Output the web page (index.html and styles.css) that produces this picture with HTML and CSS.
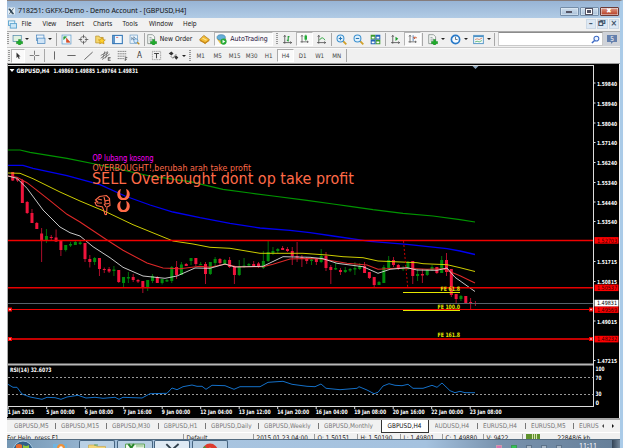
FILE: index.html
```html
<!DOCTYPE html>
<html lang="id">
<head>
<meta charset="utf-8">
<title>GKFX-Demo - GBPUSD,H4</title>
<link rel="stylesheet" href="styles.css">
</head>
<body>
<svg class="defs" width="0" height="0">
  <defs>
    <g id="plus"><path d="M9.500 8h3v3h3v3h-3v2.500h-3V14h-3v-3h3z" fill="#1fae2b" stroke="#0c7a18" stroke-width=".6"/></g>
    <g id="axes"><path d="M4 2v12M1.500 12.500H14M2.500 4L4 2l1.500 2M12 11l2 1.500-2 1.500" fill="none" stroke="#444" stroke-width="1.100"/></g>
    <g id="sheet"><path d="M2.500 1h7l3 3v10h-10z" fill="#f5f8f5" stroke="#707c78"/><path d="M5 5h3M5 7.500h5M5 10h4" stroke="#788"/></g>
  </defs>
</svg>
<main class="window">
  <header class="title">
    <svg class="appicon" viewBox="0 0 10 10"><rect width="10" height="10" fill="#e4eef5"/><path d="M1 2h2l5 7H6zM8 1L2 9" stroke="#243848" fill="#314a5e"/></svg>
    <h1>718251: GKFX-Demo - Demo Account - [GBPUSD,H4]</h1>
    <div class="winbtns"><i><b class="min"></b></i><i><b class="max"></b></i><i class="close">✖</i></div>
  </header>
  <nav class="menu">
    <svg class="menuicon" viewBox="0 0 10 10"><rect x=".5" y="1" width="7" height="5" fill="#e6f4fc" stroke="#5ba3cf"/><rect x="2.500" y="4" width="7" height="5" fill="#cbe6f6" stroke="#5ba3cf"/></svg>
    <span style="width:21px">File</span><span style="width:24px">View</span><span style="width:26.500px">Insert</span><span style="width:29.500px">Charts</span><span style="width:26.500px">Tools</span><span style="width:34px">Window</span><span>Help</span>
    <div class="mdi"><i>–</i><i>🗗</i><i>×</i></div>
  </nav>
  <div class="bar main">
    <i class="grip"></i>
    <svg class="ic" viewBox="0 0 16 16"><rect x="1.500" y="2" width="12" height="9" fill="#e2f1e0" stroke="#4b84a8"/><use href="#plus"/></svg><b class="dd"></b>
    <svg class="ic" viewBox="0 0 16 16"><rect x="2" y="1.500" width="11" height="8" fill="#eaf4fc" stroke="#4381ba"/><rect x="3.500" y="6" width="11" height="8" fill="#cfe4f6" stroke="#4381ba"/></svg><b class="dd"></b>
    <i class="sep"></i>
    <svg class="ic" viewBox="0 0 16 16"><rect x="1.500" y="1.500" width="13" height="13" fill="#eef6fb" stroke="#5b98c8"/><path d="M4 8V4h4z" fill="#2a9c3a" stroke="#2a9c3a"/><path d="M8 6l5 6H8z" fill="#d8502a" stroke="#d8502a"/></svg>
    <svg class="ic" viewBox="0 0 16 16"><circle cx="8" cy="8" r="4.500" fill="none" stroke="#555"/><path d="M8 1v5M8 10v5M1 8h5M10 8h5" stroke="#555" stroke-width="1.200"/></svg>
    <svg class="ic" viewBox="0 0 16 16"><path d="M1 3h5l1 2h5v8H1z" fill="#f5d76c" stroke="#b8902a"/><path d="M10 5l1.600 3.200 3.400.4-2.500 2.300.7 3.500-3.200-1.700-3.200 1.700.7-3.500L5 8.600l3.400-.4z" fill="#ffd22e" stroke="#b87e10" stroke-width=".8"/></svg>
    <svg class="ic" viewBox="0 0 16 16"><rect x="1" y="2" width="14" height="12" fill="#eff7fd" stroke="#2c72b4" stroke-width="1.500"/><path d="M3 2v12" stroke="#2c72b4" stroke-width="2"/><path d="M6 5h3" stroke="#d44"/></svg>
    <svg class="ic" viewBox="0 0 16 16"><rect x="1.500" y="1.500" width="11" height="12" fill="#eaf3fa" stroke="#6a9cc6"/><path d="M4 9V5l3 4V4l3 3" stroke="#4c7090" fill="none"/><circle cx="10" cy="10" r="3" fill="#d5eafa" stroke="#4787c0"/><path d="M12 12l3 3" stroke="#c39122" stroke-width="2"/></svg>
    <i class="sep"></i>
    <div class="neworder"><svg class="ic" viewBox="0 0 16 16"><use href="#sheet"/><use href="#plus"/></svg><span>New Order</span></div>
    <svg class="ic gold" viewBox="0 0 16 16"><path d="M1 8l6-6 8 6-6 6z" fill="#f3bd35" stroke="#a36e12"/><path d="M1 8l8 4 6-4v2l-6 4-8-4z" fill="#c98a1c"/><path d="M5 6l6 3" stroke="#ffe69a" stroke-width="1.500"/></svg>
    <div class="auto"><svg class="ic" viewBox="0 0 16 16"><path d="M1 7l7-5 7 5-6 7H6z" fill="#f1c84b"/><ellipse cx="7.500" cy="5" rx="6" ry="4" fill="#65afd8" stroke="#3b7fae"/><circle cx="11" cy="11" r="4.500" fill="#27aa37"/><path d="M9.500 8.500v5l4-2.500z" fill="#fff"/></svg><span>AutoTrading</span></div>
    <i class="grip g2"></i>
    <svg class="ic" viewBox="0 0 16 16"><use href="#axes"/><path d="M9 3v8M7 9h2M9 4h2" stroke="#14952a" stroke-width="1.500"/></svg>
    <svg class="ic on" viewBox="0 0 16 16"><use href="#axes"/><path d="M10 1v10" stroke="#168a26"/><rect x="8" y="2.500" width="4" height="6.500" fill="#22ad38"/></svg>
    <svg class="ic" viewBox="0 0 16 16"><use href="#axes"/><path d="M5 9q4-7 8 0" fill="none" stroke="#25a336" stroke-width="1.300"/></svg>
    <i class="sep"></i>
    <svg class="ic" viewBox="0 0 16 16"><path d="M10 10l5 5" stroke="#d1a02a" stroke-width="2.600"/><circle cx="6.500" cy="6.500" r="5" fill="#e1f2fd" stroke="#3b90cf" stroke-width="1.500"/><path d="M4 6.500h5M6.500 4v5" stroke="#2776b5" stroke-width="1.500"/></svg>
    <svg class="ic" viewBox="0 0 16 16"><path d="M10 10l5 5" stroke="#d1a02a" stroke-width="2.600"/><circle cx="6.500" cy="6.500" r="5" fill="#e1f2fd" stroke="#3b90cf" stroke-width="1.500"/><path d="M4 6.500h5" stroke="#2776b5" stroke-width="1.500"/></svg>
    <svg class="ic" viewBox="0 0 16 16"><path d="M1 1h7v7H1zM8 8h7v7H8z" fill="#3b9a2c"/><path d="M8 1h7v7H8zM1 8h7v7H1z" fill="#2464b8"/><path d="M2.500 4h4v2.500h-4zM9.500 4h4v2.500h-4zM2.500 11h4v2.500h-4zM9.500 11h4v2.500h-4z" fill="#fff"/></svg>
    <i class="sep"></i>
    <svg class="ic" viewBox="0 0 16 16"><use href="#axes"/><path d="M8 4v6l4-3z" fill="#1c9d2c"/></svg>
    <svg class="ic on" viewBox="0 0 16 16"><use href="#axes"/><path d="M9 2v9" stroke="#3769a5" stroke-width="1.300"/><path d="M15 6h-5l2-2M10 6l2 2" stroke="#c64316" stroke-width="1.300" fill="none"/></svg>
    <i class="sep"></i>
    <svg class="ic" viewBox="0 0 16 16"><use href="#sheet"/><use href="#plus"/></svg><b class="dd"></b>
    <svg class="ic" viewBox="0 0 16 16"><circle cx="8" cy="8" r="6" fill="#f6fbff" stroke="#2879c8" stroke-width="2.400"/><path d="M8 4v4h3" fill="none" stroke="#345"/></svg><b class="dd"></b>
    <svg class="ic" viewBox="0 0 16 16"><rect x="1" y="2" width="14" height="12" fill="#f5fafc" stroke="#4d91c5" stroke-width="1.300"/><path d="M1 3.500h14" stroke="#4d91c5" stroke-width="2"/><path d="M3 8l3-1 3 1 4-2" stroke="#c65a33" fill="none"/><path d="M3 11.500l3-1 3 1 4-2" stroke="#31a047" fill="none"/></svg><b class="dd"></b>
    <i class="sep end"></i>
    <div class="search"><svg viewBox="0 0 10 10"><circle cx="6" cy="4" r="2.700" fill="#eef5ff" stroke="#3c69c4" stroke-width="1.200"/><path d="M4 6L1 9" stroke="#3c69c4" stroke-width="1.600"/></svg></div>
    <div class="chat"><svg viewBox="0 0 12 10"><path d="M1 1h10v7H7L5 10V8H1z" fill="#6580ad"/><text x="4.300" y="7" font-size="6.500" fill="#fff">5</text></svg></div>
  </div>
  <div class="bar tools">
    <i class="grip"></i>
    <svg class="ic on" viewBox="0 0 16 16"><path d="M5 1v11l2.700-2.500L9.500 14l2-1-2-4H13z" fill="#333"/></svg>
    <svg class="ic" viewBox="0 0 16 16"><path d="M8 1v6M8 9v6M1 8h6M9 8h6" stroke="#666" stroke-width="1.200"/></svg>
    <i class="sep"></i>
    <svg class="ic" viewBox="0 0 16 16"><path d="M8 2v12" stroke="#555" stroke-width="1.300"/></svg>
    <svg class="ic" viewBox="0 0 16 16"><path d="M2 8h12" stroke="#555" stroke-width="1.300"/></svg>
    <svg class="ic" viewBox="0 0 16 16"><path d="M2 14L14 3" stroke="#555" stroke-width="1.300"/></svg>
    <svg class="ic" viewBox="0 0 16 16"><path d="M1 12L12 4M3 14l11-8M4 12l3-10M8 12l3-10M1 8l9-5" stroke="#555"/><path d="M15.500 11H12v4.500h3.500M12 13h3" stroke="#333" fill="none"/></svg>
    <svg class="ic" viewBox="0 0 16 16"><path d="M1 2h13M1 5.500h13M1 9h13M1 12.500h9" stroke="#555" stroke-dasharray="2 .6"/><path d="M12 16v-5h3M12 13.500h2.500" stroke="#333" fill="none"/></svg>
    <span class="ic">A</span>
    <svg class="ic" viewBox="0 0 16 16"><rect x="2" y="2" width="12" height="12" fill="none" stroke="#777" stroke-dasharray="1.500 1"/><path d="M4.500 5h7M8 5v7" stroke="#444" stroke-width="1.500"/></svg>
    <svg class="ic" viewBox="0 0 16 16"><path d="M1 5l4-3 3 3-3 3zM9 10l3-2 3 3-3 3z" fill="#333"/><path d="M4 9l3 3 5-6" fill="none" stroke="#444"/></svg><b class="dd"></b>
    <i class="grip g3"></i>
    <div class="periods"><span>M1</span><span>M5</span><span>M15</span><span>M30</span><span>H1</span><span class="on">H4</span><span>D1</span><span>W1</span><span>MN</span></div>
    <i class="sep"></i>
  </div>
  <svg class="chart" id="chart" width="612" height="354" viewBox="7 64 612 354"></svg>
  <div class="tabs">
    <span style="width:47px">GBPUSD,M5</span><span style="width:51px">GBPUSD,M15</span><span style="width:51.500px">GBPUSD,M30</span><span style="width:47.500px">GBPUSD,H1</span><span style="width:53px">GBPUSD,Daily</span><span style="width:60px">GBPUSD,Weekly</span><span style="width:57px" class="last">GBPUSD,Monthly</span><span class="active">GBPUSD,H4</span><span style="width:48.500px">AUDUSD,H4</span><span style="width:48px">EURUSD,H4</span><span style="width:48px">EURUSD,M5</span><span class="last" style="width:25px">EURUS</span><b class="arr l"></b><b class="arr r"></b>
  </div>
  <div class="status">
    <span style="width:176.500px">For Help, press F1</span><span style="width:70px">Default</span><span style="width:61px">2015.01.23 04:00</span><span style="width:43px">O: 1.50151</span><span style="width:43px">H: 1.50190</span><span style="width:42px">L: 1.49801</span><span style="width:41px">C: 1.49880</span><span style="width:39px">V: 9422</span><i class="signal"></i><span class="last">22848/6 kb</span>
  </div>
  <footer class="taskbar">
    <svg class="start" viewBox="0 0 30 9"><circle cx="15" cy="11" r="10" fill="#315f88" stroke="#a6c7df"/><path d="M8 5q3-2 6 0v5H8z" fill="#e66a2e"/><path d="M15 5q3 2 6 0v5h-6z" fill="#8fc63c"/></svg>
    <svg class="pin" viewBox="0 0 30 9"><path d="M9 4h14v6H9z" fill="#6fb4df"/><circle cx="17" cy="8" r="4" fill="#ee913b"/><circle cx="17" cy="8" r="1.800" fill="#fff"/></svg>
    <div class="task"><svg viewBox="0 0 36 9"><path d="M9 4h7l2 1.500h9V9H9z" fill="#f2d577" stroke="#c7a44a" stroke-width=".7"/><path d="M15 4h4" stroke="#4d9e4a"/></svg></div>
    <div class="task"><svg viewBox="0 0 36 9"><path d="M8 3h20v6H8z" fill="#f5fbf3" stroke="#4f9a48"/><path d="M11 3l5 6M17 3l-5 6" stroke="#28872c" stroke-width="2.200"/><path d="M19 5h8M19 7.500h8" stroke="#6ead64"/></svg></div>
    <div class="task lit"><svg viewBox="0 0 36 9"><path d="M12 3l7 7M25 3l-8 7" stroke="#31414e" stroke-width="2"/></svg></div>
    <div class="task"><svg viewBox="0 0 36 9"><circle cx="18" cy="11" r="8.500" fill="#dd3b2e"/><path d="M9.500 11a8.500 8.500 0 0 1 3-6l4 6z" fill="#36a345"/><circle cx="18" cy="11" r="4" fill="#f6f6f6"/></svg></div>
    <div class="tray"><i class="pink"></i><i class="green"></i><i></i><i></i><i></i></div>
    <span class="clock">11:11</span>
    <i class="peek"></i>
  </footer>
</main>
<script src="script.js"></script>
</body>
</html>
```
FILE: styles.css
```css
* { box-sizing: border-box; }
body { margin: 0; background: #fdfdfe; width: 625px; height: 448px; overflow: hidden; font: 7px/1 "DejaVu Sans Condensed", "DejaVu Sans", sans-serif; font-stretch: condensed; color: #333; }
i { font-style: normal; }
.defs { display: block; }
.window { width: 616px; height: 448px; margin-left: 7px; border-top: 1.500px solid #857c7c; border-right: 3px solid #aacbe8; background: #f0f0f0; display: flex; flex-direction: column; overflow: hidden; }
.window > * { flex: none; }
.title { height: 16.500px; width: 616px; background: linear-gradient(#97b4d5, #b1cbe5); display: flex; align-items: center; padding: 3px 4.500px 0 1px; }
.appicon { width: 7px; height: 8px; margin-right: 3px; }
.title h1 { margin: 0; font: 7px/9px "Noto Sans", sans-serif; color: #111; flex: 1; letter-spacing: -.045px; white-space: nowrap; }
.winbtns { display: flex; gap: 1px; margin-top: 1px; }
.winbtns i { width: 19px; height: 9px; border: 1px solid #758da8; border-radius: 1px; background: linear-gradient(#cfdeed, #a9c0d8); display: flex; align-items: center; justify-content: center; box-shadow: inset 0 0 0 .5px #e6eff8; }
.winbtns .close { background: linear-gradient(#e09a88, #b63a20); color: #fff; font-size: 7px; border-color: #6d3a36; }
.winbtns .min { width: 6px; height: 2px; background: #fff; border: .5px solid #556; margin-top: 2px; }
.winbtns .max { width: 6px; height: 5px; background: #556; border: 1.500px solid #fff; outline: .5px solid #556; }
.menu { height: 13px; display: flex; align-items: center; background: #f1f1f1; white-space: nowrap; font-family: "Noto Sans", sans-serif; font-size: 6.300px; color: #222; }
.menuicon { width: 9px; height: 9px; margin: 0 4.500px 0 1px; }
.mdi { margin-left: auto; display: flex; gap: 1px; padding-right: 1px; }
.mdi i { width: 10.500px; height: 10px; background: #dde8f4; border: 1px solid #ccd8e5; color: #44566a; font: bold 8px/8px "DejaVu Sans", sans-serif; text-align: center; overflow: hidden; }
.bar { height: 17px; display: flex; align-items: center; border-top: 1px solid #aaa; border-bottom: 1px solid #c8c8c8; background: #f0f0f0; padding-left: 1px; white-space: nowrap; }
.main { padding-left: 0; }
.main > .grip { margin-right: -.5px; }
.bar > * { flex: none; }
.ic { width: 11px; height: 11px; margin: 0 3px; flex: none; }
.ic.on { width: 17px; height: 14px; margin: 0; padding: 1px 2px; background: #fafafa; border: 1px solid #b5b5b5; border-right-color: #fff; border-bottom-color: #fff; }
.grip { width: 2px; height: 12px; background: repeating-linear-gradient(#999 0 1px, #eee 1px 2px); }
.main > .g2 { margin: 0 1px 0 3.500px; }
.sep { width: 1px; height: 13px; background: #a8a8a8; margin: 0 1px; }
.end { margin-left: 0; }
.dd { width: 0; height: 0; border: 2px solid transparent; border-top: 2.500px solid #222; border-bottom: 0; margin-right: 2.300px; margin-left: -.2px; }
.neworder { width: 50px; display: flex; align-items: center; font-size: 6.800px; color: #111; }
.neworder .ic { margin: 0 3px 0 0; }
.gold { margin: 0 4px 0 3.500px; }
.auto { width: 58.500px; height: 14px; display: flex; align-items: center; background: #fafafa; border: 1px solid #b5b5b5; border-right-color: #fff; border-bottom-color: #fff; font-size: 7px; color: #24113a; }
.auto .ic { margin: 0 3px 0 1px; }
.search { width: 105px; height: 14px; background: #fff; border: 1px solid #c9c9c9; border-top-color: #8c8c8c; display: flex; justify-content: flex-end; align-items: center; padding-right: 2px; margin-left: auto; }
.search svg { width: 9px; height: 9px; }
.chat { width: 17px; height: 14px; background: #cfd2d8; display: flex; align-items: center; justify-content: center; }
.chat svg { width: 12px; height: 10px; }
.tools { height: 16px; border-top-color: #fafafa; border-bottom: 1.500px solid #999; }
.tools .ic.on { width: 14px; margin: 0 1px; }
span.ic { text-align: center; line-height: 11px; font-size: 8px; }
.g3 { margin: 0 1px; }
.periods { display: flex; font-size: 6.200px; color: #444; align-items: center; }
.periods span { width: 17px; height: 13px; line-height: 12px; text-align: center; border: 1px solid transparent; letter-spacing: -.1px; }
.periods .on { border-color: #aaa #fff #fff #aaa; background: #fafafa; }
.chart { display: block; background: #000; }
.tabs { height: 15px; display: flex; align-items: center; border-top: 2px solid #aaa; background: #f1f1f1; font-size: 6.400px; color: #777; padding-left: 7px; white-space: nowrap; box-shadow: inset 0 -1px #fff; }
.tabs span { flex: none; overflow: hidden; background: linear-gradient(#777, #777) right 5px center / 1px 7px no-repeat; }
.tabs .last { background: none; }
.tabs .active { width: 48px; height: 13px; line-height: 12px; padding-left: 6px; margin-right: 6px; border: 1px solid #333; border-top: 0; background: #fff; color: #111; margin-left: -.5px; }
.arr { border: 2px solid transparent; }
.arr.l { border-right: 2.500px solid #444; border-left: 0; margin-left: -2px; }
.arr.r { border-left: 2.500px solid #111; border-right: 0; margin-left: 7.500px; }
.status { height: 6px; overflow: hidden; display: flex; font-size: 6.400px; line-height: 8px; padding-top: 1px; color: #222; white-space: nowrap; }
.status span { flex: none; border-right: 1px solid #999; padding-left: 3px; }
.status span:first-child { padding-left: 0; }
.status .last { border: 0; padding-left: 18px; }
.signal { width: 14px; height: 6px; margin-left: 3px; background: repeating-linear-gradient(90deg, #5f922c 0 1.500px, #d8e0b2 1.500px 2.200px); }
.taskbar { height: 10px; width: 616px; display: flex; border-top: 1px solid #536b80; background: linear-gradient(90deg, #7396b3, #a9c5e0 20%, #a5c2df 68%, #7892ad 80%, #657e98); color: #fff; }
.taskbar > * { flex: none; }
.start { width: 30px; height: 9px; margin-left: 1px; }
.pin { width: 30px; height: 9px; margin: 0 5px 0 6px; }
.task { width: 36px; height: 10px; margin-right: 1.500px; border: 1px solid #456480; border-bottom: 0; border-radius: 2px 2px 0 0; background: #b9d0e4; }
.task.lit { background: #dfeaf4; }
.task svg { display: block; width: 34px; height: 9px; }
.tray { display: flex; gap: 9px; margin-left: 267px; padding-top: 5px; width: 83px; }
.tray i { width: 6px; height: 5px; background: #a5b5c5; border: 1px solid #5d738a; }
.tray .pink { background: #d774b0; border-color: #c9a; }
.tray .green { background: #35c456; border-color: #3a9a55; }
.clock { font: 7px/12px "Noto Sans", sans-serif; width: 33px; }
.peek { width: 9px; height: 10px; background: linear-gradient(90deg, #334457, #7f93a7); }
#chart text { font-family: "DejaVu Sans Condensed", "DejaVu Sans", sans-serif; }
```
FILE: script.js
```js
const NS = 'http://www.w3.org/2000/svg';
const chart = document.getElementById('chart');

function add(tag, attrs, text) {
  const el = document.createElementNS(NS, tag);
  for (const k in attrs) el.setAttribute(k, attrs[k]);
  if (text) el.textContent = text;
  chart.appendChild(el);
}
function line(x1, y1, x2, y2, stroke, width, dash) {
  add('line', { x1, y1, x2, y2, stroke, 'stroke-width': width || 1, 'stroke-dasharray': dash || 'none' });
}
function label(x, y, size, len, fill, text, weight) {
  add('text', { x, y, 'font-size': size, textLength: len, lengthAdjust: 'spacingAndGlyphs', fill, 'font-weight': weight || 'normal' }, text);
}
function curve(points, stroke, width) {
  add('polyline', { points, fill: 'none', stroke, 'stroke-width': width });
}

// window edge and pane borders
line(7.5, 64, 7.5, 417, '#a9a9a9', 1);
line(8, 65.5, 594, 65.5, '#ddd', 1);
line(593.5, 65, 593.5, 407, '#ddd', 1);
line(8, 364.5, 593, 364.5, '#b8b8b8', 2);
line(8, 406.5, 594, 406.5, '#ddd', 1);

// moving averages
curve('8,150 20,150 30,152.3 67,158.3 100,165 150,176 190,181.700 223,189.3 250,193 273,196 307,200.3 333,204 350,206.3 373,209.700 403,213.3 433,216 460,219.700 475,222', '#009400', 1.2);
curve('8,165.3 23,165.3 33,168.3 67,175.700 100,184.700 125,196 150,205 173,212 200,217.700 230,223.3 260,228 290,230.3 310,232.700 333,236 370,241.3 407,244.3 447,248.700 460,251 475,254.5', '#0000f0', 1.3);

// candles: open/close top and bottom, high, low, direction (1 = up)
const candles = [
  [172,180.5,172,181],[179,180.5,177,182],[180.5,203,179,203],[202,213,201,214],[213,223,209,223],[223,229,222,229],[233.5,240,228,262],[236,240,229,243,1],[237,238,235,240],[237.5,241.5,229.5,242],
  [241,250,241,256],[245,250,245,251.5,1],[244,245.5,242,247,1],[242,245,241,245,1],[242.5,244,241,245,1],[243,259,243,262],[259,262,255,267.5],[258,262,257,265,1],[258,269,258,276],[269,270,267.5,273],
  [269,271.5,267,273],[269.5,271,266,276,1],[270,282,270,283],[277,283,277,287,1],[277,278.5,272,283,1],[277,280,274,282],[280,281.5,279,283],[281,288,281,293],[280,287,280,291,1],[276,281,274,283,1],
  [277,283,276,283],[279,283,279,284.5,1],[280,281.5,279,282,1],[267,281,266,283,1],[267,275,261,279],[264.5,275,262,275,1],[264,266,263,266],[258,261,258,265,1],[258,264,258,266],[264,265,262,265,1],
  [264,274,262,284],[262,274,262,275,1],[259,263,257,267,1],[259,263,258,265],[260,264,259,264,1],[260,267,257,268],[266,275,266,284],[266,275,260,276,1],[265.5,267,258,268,1],[264,265.5,263,267,1],
  [264,266,261,266],[263.5,267,262,268],[261,268,251,269,1],[252,261,241,262,1],[251,253,247,255,1],[249,251,248,253,1],[248,250,246,250],[249,251,247,252],[251,256,247,265],[256,257.5,242,262],
  [257,259,255,267],[259,261,257,264],[259.5,261,257,265,1],[259,262,258,265],[256,262,249,263,1],[256,268,252,271],[267,270,265,284],[268,269.5,263,270,1],[270,272,268,275],[270,272,267,273,1],
  [269,270.5,268,272,1],[268,269.5,262,275,1],[266,269,263,270,1],[266,273,262,273],[272,278,272,279],[277,285,277,287],[282,285,281,285,1],[267,283,265,283,1],[260,268,256,268,1],[260,265,257,267],
  [265,269,264,270],[268,269.5,266,271,1],[262,269,261,270,1],[261,276,261,284],[274,276,269,281,1],[274,275.5,269,283],[269.5,275,269,276,1],[267,270,265,271,1],[267,273,267,274],[260,273,256,273,1],
  [260,272,253,276],[269,295,269,297],[294,299,294,304],[296,299,295,301,1],[296,303,296,304],[302,304,298,309],[303,304,301,306]
];
candles.forEach(([top, bottom, high, low, up], i) => {
  const x = 12.7 + 4.82 * i;
  const color = up ? '#008a0c' : '#f0143c';
  line(x, high, x, low, up ? '#007a0a' : '#c01030', 0.9);
  add('rect', { x: x - 1.5, y: top, width: 3, height: bottom - top, fill: color });
});

curve('8,173 20,173.3 33,178.700 60,192 80,201 107,212.3 133,224.700 160,235.700 173,241 193,244 210,247.3 230,248.3 260,253.3 303,253.3 327,255 343,256.700 363,257.700 378,261 417,262.700 423,263.700 447,264.700 460,267.700 475,271.5', '#d8d800', 0.95);
curve('8,176 17,177.3 27,182.700 37,190.3 50,200.700 67,214.3 80,222 107,240 123,250.3 147,263 163,268 180,268.700 200,266.3 210,267.3 225,264.3 237,266.700 263,266.700 273,264.3 290,259 307,258.5 320,258.700 347,263.3 367,265 378,269.3 400,268 427,269.3 443,268.700 460,275.700 475,283', '#e02828', 1.05);
curve('8,176 17,178.3 27,188.3 43,210 60,227 70,232.700 80,236 93,246.700 110,257.700 123,267.3 143,276 165,278.3 177,276 195,268 210,268.3 225,264 235,267 263,266.3 283,256.700 310,257.3 323,258.700 337,263.3 363,266.700 378,273.3 390,269.3 407,267.700 417,270 437,270.3 447,268 455,277.3 475,291.5', '#dcdcdc', 0.9);

// support and resistance levels
line(8, 240.5, 593, 240.5, '#f00000', 1.4);
line(8, 287.700, 593, 287.700, '#e80000', 1.6);
line(8, 303.5, 593, 303.5, '#56616a', 1);
line(8, 309.5, 593, 309.5, '#f00000', 1);
line(8, 339, 593, 339, '#c40000', 2);
line(403.5, 241, 407.700, 287, '#d00000', 1, '2 2');
[309.5, 339].forEach(y => [10, 591].forEach(x => {
  add('rect', { x: x - 2, y: y - 2, width: 4, height: 4, fill: '#f00000' });
  add('rect', { x: x - .7, y: y - .7, width: 1.4, height: 1.4, fill: '#fff' });
}));
line(403, 292.5, 460, 292.5, '#e6e600', 1.2);
line(403, 310.5, 460, 310.5, '#e6e600', 1.2);
label(440.5, 291, 6, 19.5, '#e6e600', 'FE 61.8', 'bold');
label(437.5, 309, 6, 22.5, '#e6e600', 'FE 100.0', 'bold');
label(437.5, 337, 6, 22.5, '#e6e600', 'FE 161.8', 'bold');

// header and signal captions
add('path', { d: 'M9.5 69h5l-2.500 3z', fill: '#fff' });
label(16.5, 72.5, 6, 33, '#fff', 'GBPUSD,H4', 'bold');
label(53.5, 72.5, 6, 84.5, '#fff', '1.49860 1.49885 1.49764 1.49831', 'bold');
add('path', { d: 'M472.500 66h6l-3 3z', fill: '#8da5bb' });
label(92.5, 161, 8, 61, '#f800f8', 'OP lubang kosong');
label(92.5, 171, 8.6, 158.5, '#ff6a48', 'OVERBOUGHT!,berubah arah take profit');
label(92, 184, 15.4, 262, '#ff6a48', 'SELL Overbought dont op take profit');

// thumb-down hand and open ring markers
add('path', { d: 'M95.500 200l4-3.500 7-1 3 3 .5 7-3 1.500-.5 7.500q-2 .5-2-2l-2-5.500-6-1.500-1.500-3 2.500-1zM98 199l4 1M97 203l5 0M104 197l1 4 4-1M105 201l0 3 4-.5M104 204l2 3', fill: 'none', stroke: '#ff6a48', 'stroke-width': 1.1 });
[194.6, 206.6].forEach(y => {
  add('path', { d: `M121 ${y - 5.5}C116 ${y - 4} 116 ${y + 3.5} 121 ${y + 5.5}H126C131 ${y + 3.5} 131 ${y - 4} 126 ${y - 5.5}C127.5 ${y - 2} 127 ${y + 3.5} 123.5 ${y + 3.5}C120 ${y + 3.5} 119.5 ${y - 2} 121 ${y - 5.5}z`, fill: '#ff6a48' });
});

// price scale
[[83.5, '1.59840'], [103.5, '1.58940'], [123.5, '1.58040'], [143, '1.57140'], [163, '1.56240'], [183, '1.55340'], [202.5, '1.54440'], [222, '1.53540'], [262, '1.51715'], [282, '1.50815'], [321.5, '1.49015'], [361, '1.47215']].forEach(([y, t]) => {
  line(594, y - .5, 595.5, y - .5, '#ddd', 1);
  label(597, y + 2, 5.6, 20, '#fff', t, 'bold');
});
[[240.3, '1.52703', '#f00', '#300'], [287.700, '1.50537', '#f00', '#300'], [309.5, '1.49569', '#f00', '#300'], [339, '1.48232', '#f00', '#300'], [303, '1.49831', '#fff', '#000']].forEach(([y, t, bg, fg]) => {
  add('rect', { x: 594.5, y: y - 3.2, width: 24, height: 6.600, fill: bg });
  label(597, y + 2.2, 5.8, 20, fg, t);
});

// RSI pane
label(10, 372.300, 6, 41.5, '#fff', 'RSI(14) 32.6073', 'bold');
line(8, 377.5, 593, 377.5, '#999', 1, '2 2');
line(8, 394.5, 593, 394.5, '#999', 1, '2 2');
[[371, '100', 9], [379.5, '70', 6], [396, '30', 6], [405, '0', 3.5]].forEach(([y, t, w]) => label(595.5, y, 6, w, '#fff', t, 'bold'));
curve('8,384.3 13,387.3 17,387.3 22,394 30,397 42,399.3 47,397.3 55,397.700 61,399.3 67,397 78,395.3 86,398 95,397.3 103,398.3 115,397.3 119,399.3 123,397.3 142,398 150,393.700 167,393.3 172,388 177,389.700 183,386.700 192,385 197,386.3 202,386.3 206,389.3 212,385.3 225,385.700 234,389.3 240,386.700 260,386.700 268,382.3 283,381.3 292,384.3 307,386.3 315,386.700 321,384 326,388.3 340,389.700 357,388.3 359,386.700 367,390 374,393.700 378,392.3 383,386 389,383.700 395,385.3 402,385.700 408,384.3 413,388.3 423,388.3 432,385.3 437,387.3 442,383 450,390.700 455,392.700 460,391.3 465,392.700 475,392.700', '#1470c8', 1);

// time scale
['1 Jan 2015', '5 Jan 00:00', '6 Jan 08:00', '7 Jan 16:00', '9 Jan 00:00', '12 Jan 04:00', '13 Jan 12:00', '14 Jan 20:00', '16 Jan 04:00', '19 Jan 08:00', '20 Jan 16:00', '22 Jan 00:00', '23 Jan 08:00'].forEach((t, i) => {
  const x = 7.700 + 38.5 * i;
  line(x + .5, 407, x + .5, 409, '#ddd', 1);
  label(x, 414.200, 6, i === 0 ? 26.5 : i < 5 ? 28.5 : 32, '#fff', t, 'bold');
});
```
